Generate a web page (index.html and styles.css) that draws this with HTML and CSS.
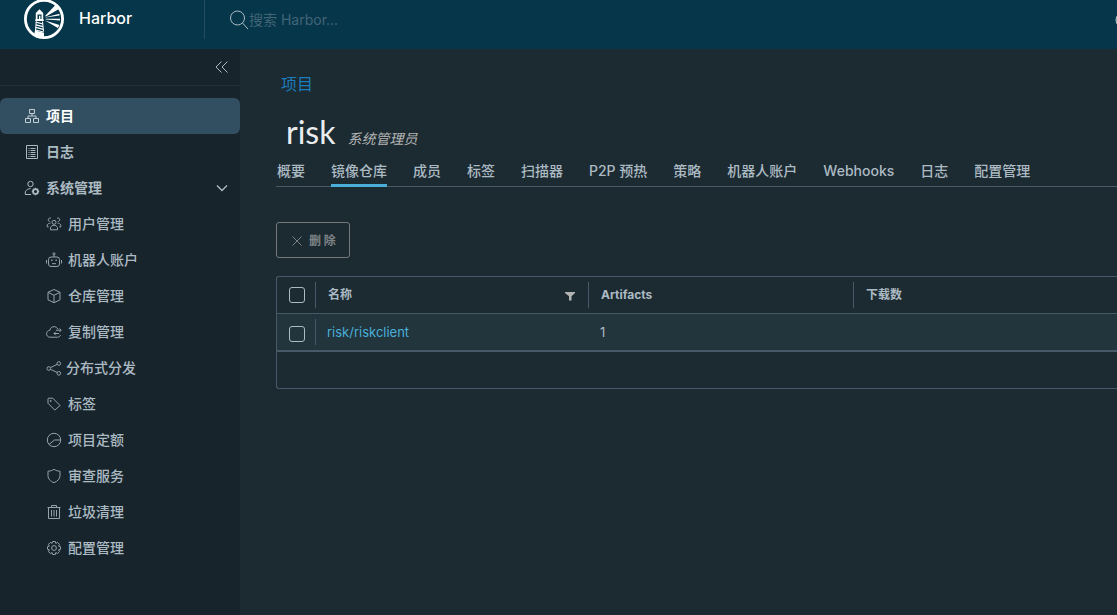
FILE: index.html
```html
<!DOCTYPE html>
<html lang="zh-CN">
<head>
<meta charset="utf-8">
<title>Harbor</title>
<link rel="stylesheet" href="styles.css">
</head>
<body>
<header class="header">
  <a class="brand" href="#">
    <svg class="logo" viewBox="0 0 40 40" aria-hidden="true">
      <circle cx="20" cy="20" r="18.600" fill="none" stroke="#fff" stroke-width="2.800"/>
      <path fill="#fff" d="M15.500 10.300l3.700 3.700v6.500h.6v1.500h-8.600v-1.500h.6V14z"/>
      <path fill="#063649" d="M13.500 15.500h4v4.500h-4z"/>
      <path fill="#fff" d="M15 16.800h1.400v3.200H15z"/>
      <path stroke="#fff" stroke-width="1.200" d="M12 23.200l7 1.800M12 25.800l7 1.800M11.800 28.400l7.600 2M11.500 31l8 2"/>
      <path stroke="#fff" stroke-width="1" d="M12.200 22.500l-.7 10M18.500 22.500l1 10"/>
      <path fill="#fff" d="M11 31.500l9 2.200V39h-3l-7-3z"/>
      <path fill="#fff" d="M21 17L31.500 6l3.500 4-13 7.600zM21.500 18.200l14-3.400v1.800l-14 2zM21.500 19.800H36v1.600l-14-.8zM21 21.500l14.500 4.500-1.700 3z"/>
    </svg>
    <span class="brand-name">Harbor</span>
  </a>
  <form class="search">
    <label class="search-label" for="search" aria-label="搜索">
      <svg class="search-icon" viewBox="0 0 20 20"><circle cx="8.500" cy="8" r="7"/><path d="M13.500 13l5.500 6"/></svg>
    </label>
    <input class="search-input" id="search" type="text" placeholder="搜索 Harbor...">
  </form>
  <button class="language" aria-label="语言"><svg viewBox="0 0 18 18"><circle cx="9" cy="9" r="8"/><path d="M1 9h16M9 1c-5 5-5 11 0 16M9 1c5 5 5 11 0 16"/></svg></button>
</header>
<div class="body">
  <nav class="sidebar">
    <div class="collapse-row">
      <button class="collapse" aria-label="收起"><svg viewBox="0 0 14 14"><path d="M6.500 1.500L1 7l5.500 5.500M12.500 1.500L7 7l5.500 5.500"/></svg></button>
    </div>
    <div class="menu">
      <a class="item active" href="#"><svg class="icon" viewBox="0 0 16 16"><path d="M5.500 1.500h5v4h-5zM1.500 10.500h5v4h-5zM9.500 10.500h5v4h-5zM8 5.500v2.500M4 10.500v-2.500h8v2.500"/></svg>项目</a>
      <a class="item" href="#"><svg class="icon" viewBox="0 0 16 16"><path d="M2.500 1.500h11v13h-11zM4.500 4.500h1M4.500 6.500h1M4.500 8.500h1M4.500 10.500h1M4.500 12.500h1M6.500 4.500h5M6.500 6.500h5M6.500 8.500h5M6.500 10.500h5M6.500 12.500h5"/></svg>日志</a>
      <button class="item" aria-expanded="true"><svg class="icon" viewBox="0 0 16 16"><circle cx="6.500" cy="4" r="2.700"/><path d="M7 14.500H1.300v-2.700c1-2 3-3.200 5.200-3.200"/><circle cx="11.500" cy="11.500" r="2.400" stroke-width="1.700"/><path stroke-width="1.300" d="M11.500 7.800v1.500M11.500 13.700v1.500M7.800 11.500h1.500M13.700 11.500h1.500M8.900 8.900l1 1M13.100 13.100l1 1M14.100 8.900l-1 1M9.900 13.100l-1 1"/></svg>系统管理<svg class="caret" viewBox="0 0 14 14"><path d="M2 4.500l5 5 5-5"/></svg></button>
      <div class="submenu">
        <a class="item" href="#"><svg class="icon" viewBox="0 0 16 16"><circle cx="8" cy="6.300" r="2"/><path d="M4.500 13.800v-2.300c.8-1.500 2-2.200 3.500-2.200s2.700.7 3.500 2.200v2.300zM5 2.400a1.700 1.700 0 1 0-.8 3M11 2.400a1.700 1.700 0 1 1 .8 3M4.500 7.200c-1.600 0-2.600.7-3.300 1.700v2h1.500M11.500 7.200c1.600 0 2.600.7 3.300 1.700v2h-1.500"/></svg>用户管理</a>
        <a class="item" href="#"><svg class="icon" viewBox="0 0 16 16"><rect x="2.500" y="5" width="11" height="9.500" rx="2.500"/><circle cx="8" cy="1.800" r="1"/><path d="M8 2.800V5M.500 8v3.500M15.500 8v3.500M6 11.700h4"/><path stroke-width="1.500" d="M5.200 8.300h1.300M9.500 8.300h1.300"/></svg>机器人账户</a>
        <a class="item" href="#"><svg class="icon" viewBox="0 0 16 16"><path d="M8 1.500l6 2.800v7.500l-6 2.900-6-2.900V4.300zM2 4.300l6 3 6-3M8 7.300v7.400"/></svg>仓库管理</a>
        <a class="item" href="#"><svg class="icon" viewBox="0 0 16 16"><path d="M12 5.200C11 3.300 9.800 2.700 8 2.700c-2.300 0-3.800 1.500-4 3.500C2 6.500.6 7.700.6 9.700c0 2.200 1.400 3.500 3.400 3.500h7.500c1.500 0 2.600-.8 3-2.200M10 6.200h5M13.500 4.500l1.700 1.700-1.700 1.700M13 9.500H8M9.700 7.800L8 9.500l1.700 1.700"/></svg>复制管理</a>
        <a class="item tight" href="#"><svg class="icon" viewBox="0 0 16 16"><circle cx="2.800" cy="8.500" r="1.800"/><circle cx="12.800" cy="3.500" r="1.800"/><circle cx="12.800" cy="13.300" r="1.800"/><path d="M4.500 7.600l6.600-3.200M4.500 9.400l6.600 3"/></svg>分布式分发</a>
        <a class="item" href="#"><svg class="icon" viewBox="0 0 16 16"><path d="M2 2.500v4.800l6.800 6.800 5.300-4.600-7.300-7.300H2.500z"/><circle cx="4.700" cy="5" r=".6"/></svg>标签</a>
        <a class="item" href="#"><svg class="icon" viewBox="0 0 16 16"><circle cx="8" cy="8" r="6.700"/><path d="M3 12.500L8.500 8h6"/></svg>项目定额</a>
        <a class="item" href="#"><svg class="icon" viewBox="0 0 16 16"><path d="M8 1.300c1.800 1.300 3.800 1.800 6 1.900v4.500c0 3.200-2.500 5.600-6 7-3.500-1.400-6-3.800-6-7V3.200c2.200-.1 4.200-.6 6-1.900z"/></svg>审查服务</a>
        <a class="item" href="#"><svg class="icon" viewBox="0 0 16 16"><path d="M1.500 3.500h13M5.500 3.500v-2h5v2M2.500 3.500v11h11v-11M5.500 6v6.500M8 6v6.500M10.500 6v6.500"/></svg>垃圾清理</a>
        <a class="item" href="#"><svg class="icon" viewBox="0 0 16 16"><circle cx="8" cy="8" r="2.400"/><path d="M6.700 1.500h2.600l.5 1.900 1.800-1 1.900 1.900-1 1.800 2 .6v2.600l-2 .5 1 1.900-1.900 1.800-1.800-1-.5 2H6.700l-.6-2-1.800 1-1.900-1.800 1-1.900-1.900-.5V6.700l1.900-.6-1-1.800 1.900-1.900 1.800 1z"/></svg>配置管理</a>
      </div>
    </div>
  </nav>
  <main class="main">
    <a class="crumb" href="#">项目</a>
    <div class="title-row"><h1 class="title">risk</h1><em class="role">系统管理员</em></div>
    <nav class="tabs">
      <button class="tab">概要</button>
      <button class="tab selected">镜像仓库</button>
      <button class="tab">成员</button>
      <button class="tab">标签</button>
      <button class="tab">扫描器</button>
      <button class="tab">P2P 预热</button>
      <button class="tab">策略</button>
      <button class="tab">机器人账户</button>
      <button class="tab">Webhooks</button>
      <button class="tab">日志</button>
      <button class="tab">配置管理</button>
    </nav>
    <button class="delete" disabled><svg viewBox="0 0 12 12"><path d="M1.500 1.500l9 9M10.500 1.500l-9 9"/></svg><span>删 除</span></button>
    <div class="datagrid">
      <table class="grid">
        <colgroup><col class="col-check"><col class="col-name"><col class="col-artifacts"><col></colgroup>
        <thead>
          <tr>
            <th><input class="check" type="checkbox" aria-label="全选"></th>
            <th><div class="cell">名称<button class="filter" aria-label="筛选"><svg viewBox="0 0 10 10"><path d="M0 1h10v1L6.500 5.200V9.500h-2.500V5.200L0 2z"/></svg></button></div></th>
            <th><div class="cell">Artifacts</div></th>
            <th><div class="cell">下载数</div></th>
          </tr>
        </thead>
        <tbody>
          <tr>
            <td><input class="check" type="checkbox" aria-label="选择 risk/riskclient"></td>
            <td><div class="cell divided"><a class="link" href="#">risk/riskclient</a></div></td>
            <td><div class="cell">1</div></td>
            <td></td>
          </tr>
        </tbody>
      </table>
      <div class="grid-footer"></div>
    </div>
  </main>
</div>
</body>
</html>
```
FILE: styles.css
```css
* { box-sizing: border-box; }
body {
  margin: 0;
  min-height: 100vh;
  display: flex;
  flex-direction: column;
  overflow-x: hidden;
  background: #1c2b32;
  color: #acbac3;
  font: 14px/20px Inter, "Noto Sans CJK SC", sans-serif;
}
a { color: inherit; text-decoration: none; }
button { margin: 0; padding: 0; border: 0; background: none; color: inherit; font: inherit; }
svg { display: block; flex: none; fill: none; stroke: currentColor; }

.header { display: flex; height: 49px; padding-bottom: 10px; background: #063649; overflow: hidden; }
.brand { display: flex; align-items: center; gap: 15px; width: 205px; padding: 0 0 2px 24px; border-right: 1px solid #254c5e; color: #fff; }
.logo { width: 40px; height: 40px; stroke: none; }
.brand-name { padding-bottom: 2px; font-size: 16px; font-weight: 500; }
.search { display: flex; flex: 1; align-items: center; padding-left: 24px; }
.search-icon { width: 20px; height: 20px; color: #adbbc4; }
.search-input { flex: 1; padding: 0; border: 0; outline: 0; background: none; color: #fff; font: inherit; }
.search-input::placeholder { color: #426477; opacity: 1; }
.language { width: 18px; margin-right: -16px; color: #bcc9d0; }
.language svg { width: 18px; height: 18px; }

.body { display: flex; flex: 1; }
.sidebar { flex: 0 0 240px; background: #17242b; }
.collapse-row { display: flex; align-items: center; justify-content: flex-end; height: 37px; padding-right: 11px; border-bottom: 1px solid #23323a; }
.collapse svg { width: 14px; height: 14px; }
.menu { padding-top: 12px; }
.item { display: flex; align-items: center; gap: 6px; width: 100%; height: 36px; padding: 0 11px 0 24px; font-weight: 700; text-align: left; }
.active { background: #324f62; border-radius: 6px; color: #fff; }
.active .icon { color: #c5d0d6; }
.icon { width: 16px; height: 16px; }
.caret { width: 14px; height: 14px; margin-left: auto; stroke-width: 1.4; }
.submenu .item { padding-left: 46px; font-weight: 500; }
.submenu .icon { opacity: 0.85; }
.submenu .tight { gap: 4px; }

.main { flex: 1; min-width: 0; padding: 23px 0 0 36px; }
.crumb { display: block; padding-left: 5px; color: #1b7dbc; font-size: 16px; line-height: 24px; }
.title-row { display: flex; align-items: baseline; gap: 12px; height: 57px; padding: 16px 0 0 10px; }
.title { margin: 0; color: #eaedf0; font-family: Lato, sans-serif; font-size: 32px; font-weight: 400; line-height: 40px; }
.role { color: #b3b3b3; }
.tabs { display: flex; gap: 26px; height: 34px; padding-left: 1px; border-bottom: 1px solid #485969; }
.tab { height: 34px; padding-top: 5px; border-bottom: 3px solid transparent; font-weight: 500; white-space: nowrap; }
.selected { border-bottom-color: #49afd9; }
.delete { display: flex; align-items: center; gap: 6px; height: 36px; margin-top: 35px; padding: 1px 13px 0 14px; border: 1px solid #73777a; border-radius: 3px; color: #7d8285; font-size: 12px; font-weight: 700; }
.delete svg { width: 12px; height: 12px; }

.datagrid { margin-top: 18px; border: 1px solid #485969; border-right: 0; border-radius: 3px 0 0 3px; }
.grid { width: 100%; border-spacing: 0; table-layout: fixed; }
.col-check { width: 38px; }
.col-name { width: 273px; }
.col-artifacts { width: 265px; }
.grid th, .grid td { padding: 0; text-align: left; }
.grid th { height: 37px; border-bottom: 1px solid #485969; font-size: 12px; }
.grid td { height: 38px; border-bottom: 2px solid #485969; background: #22343c; font-size: 13px; }
.cell { display: flex; align-items: center; height: 26px; padding: 0 13px 0 12px; }
.grid th .cell, .divided { border-left: 1px solid #485969; }
.grid td .cell { padding-left: 12px; }
.grid td .divided { padding-left: 11px; }
.filter { margin-left: auto; padding-top: 2px; color: #b3b3b3; }
.filter svg { width: 10px; height: 10px; fill: currentColor; stroke: none; }
.check { display: block; appearance: none; width: 16px; height: 16px; margin: 0 0 0 12px; border: 1px solid #acbac3; border-radius: 3px; }
.grid td .check { margin-top: 4px; }
.link { color: #49afd9; }
.grid-footer { height: 36px; }
```
